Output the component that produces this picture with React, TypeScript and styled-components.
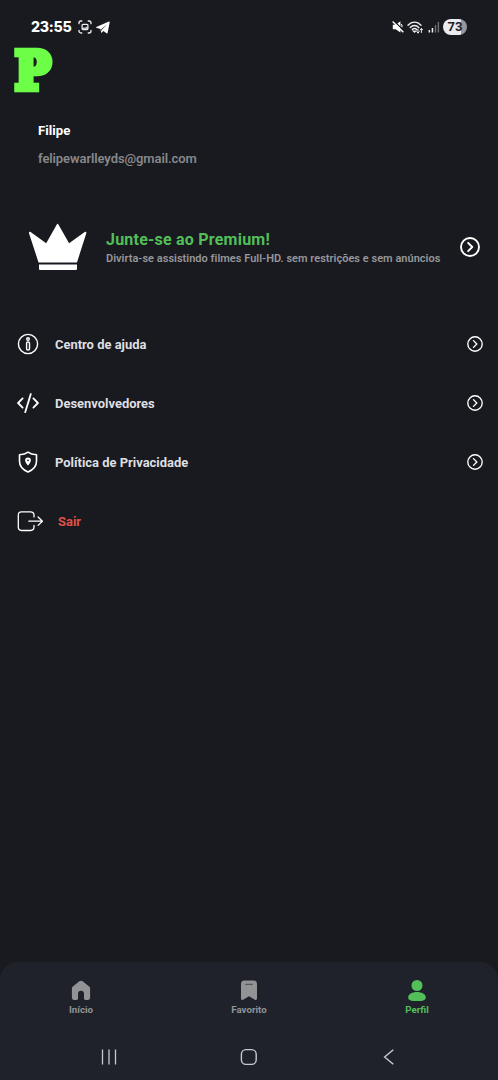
import React from 'react';
import styled, { createGlobalStyle } from 'styled-components';

const GlobalStyle = createGlobalStyle`
  * { box-sizing: border-box; }
  body { margin: 0; background: #191a1f; font-family: Roboto, sans-serif; }
  svg { display: block; flex: none; }
`;

const Screen = styled.div`
  display: flex;
  flex-direction: column;
  width: 100%;
  height: 1080px;
  overflow: hidden;
  background: #191a1f;
  color: #fff;
`;

const StatusBar = styled.header`
  display: flex;
  align-items: center;
  justify-content: space-between;
  height: 46px;
  padding: 8px 31px 0;
`;

const StatusGroup = styled.div<{ $gap: number }>`
  display: flex;
  align-items: center;
  gap: ${(p) => p.$gap}px;
`;

const Clock = styled.span`
  width: 41px;
  margin-right: 2px;
  font: 800 14.2px/18px Inter, sans-serif;
  letter-spacing: -0.25px;
  white-space: nowrap;
`;

const Battery = styled.span`
  width: 24px;
  height: 16px;
  border-radius: 8px;
  background: linear-gradient(90deg, #ececf0 73%, #96979c 73%);
  color: #202126;
  font: 700 13px/16px Roboto, sans-serif;
  text-align: center;
`;

const Brand = styled.div`
  height: 54px;
  padding-left: 15px;
  color: #6dff48;
  font: 700 52px/50px 'DejaVu Serif', serif;
  -webkit-text-stroke: 6.5px #6dff48;
  transform: scaleX(0.913);
  transform-origin: 15px 0;
`;

const Account = styled.section`
  display: flex;
  flex-direction: column;
  gap: 8px;
  height: 110px;
  padding: 21px 38px 0;
`;

const Name = styled.span`
  font: 700 13.2px/20px Roboto, sans-serif;
`;

const Email = styled.span`
  color: #87888b;
  font: 600 13px/20px Roboto, sans-serif;
  letter-spacing: -0.09px;
`;

const Premium = styled.section`
  display: flex;
  align-items: center;
  height: 74px;
  padding: 0 18px 0 28px;
`;

const PremiumCopy = styled.div`
  display: flex;
  flex: 1;
  flex-direction: column;
  padding: 3px 0 0 18px;
  white-space: nowrap;
`;

const PremiumTitle = styled.span`
  color: #52bf59;
  font: 700 16px/20px Roboto, sans-serif;
  letter-spacing: 0.22px;
`;

const PremiumText = styled.span`
  color: #96979b;
  font: 600 11px/17px Roboto, sans-serif;
  letter-spacing: 0.02px;
`;

const Menu = styled.nav`
  display: flex;
  flex-direction: column;
  padding: 30px 15px 0 17px;
`;

const MenuRow = styled.div`
  display: flex;
  align-items: center;
  height: 59px;
`;

const IconSlot = styled.span<{ $width: number }>`
  width: ${(p) => p.$width}px;
`;

const MenuLabel = styled.span<{ $danger?: boolean }>`
  flex: 1;
  padding-top: 3px;
  color: ${(p) => (p.$danger ? '#df5148' : '#dedfe1')};
  font: 700 12.95px/20px Roboto, sans-serif;
`;

const BottomArea = styled.footer`
  height: 118px;
  margin-top: auto;
  border-radius: 18px 18px 0 0;
  background: #1f222a;
`;

const Tabs = styled.nav`
  display: grid;
  grid-template-columns: repeat(3, 168px);
  justify-content: center;
  height: 71px;
  padding-top: 17px;
`;

const Tab = styled.div<{ $active?: boolean }>`
  display: flex;
  flex-direction: column;
  align-items: center;
  gap: 2px;
  color: ${(p) => (p.$active ? '#52bf59' : '#929395')};
  font: 700 9.7px/13px Roboto, sans-serif;
`;

const SystemNav = styled.div`
  display: grid;
  grid-template-columns: repeat(3, 140px);
  align-items: center;
  justify-content: center;
  justify-items: center;
  height: 48px;
`;

const Arrow = ({ size, weight }: { size: number; weight: number }) => (
  <svg width={size} height={size} viewBox="0 0 20 20" fill="none" stroke="#fff" strokeWidth={weight} strokeLinecap="round" strokeLinejoin="round">
    <circle cx="10" cy="10" r="9" />
    <path d="M8.1 5.8 12.3 10l-4.2 4.2" />
  </svg>
);

const CaptureIcon = () => (
  <svg width="14" height="14" viewBox="0 0 14 14" fill="none" stroke="#eee" strokeWidth="1.3" strokeLinecap="round">
    <path d="M1 3.7V3a2 2 0 0 1 2-2h.8M10.2 1h.8a2 2 0 0 1 2 2v.7M13 10.3v.7a2 2 0 0 1-2 2h-.8M3.8 13H3a2 2 0 0 1-2-2v-.7" />
    <rect x="4.1" y="4.3" width="5.8" height="5.2" rx="1" />
    <path d="M4.5 8.6 6 7.7l1 .5L8.5 7l1 1.6Z" fill="#eee" strokeWidth=".6" />
  </svg>
);

const SendIcon = () => (
  <svg width="14" height="13" viewBox="0 0 14 13" fill="#fff">
    <path d="M.3 5.9 12.9.5c.6-.2.9.1.8.7l-2 10.4c-.1.8-.6 1-1.2.6L7.4 9.9 5.9 11.5c-.4.4-.8.3-.9-.4L4.5 8 .4 6.8c-.6-.2-.6-.6-.1-.9Zm4.9 2.3.4 2.2.5-2 5-5.2Z" />
  </svg>
);

const MuteIcon = () => (
  <svg width="12" height="12" viewBox="0 0 12 12">
    <path d="M.8 3.7h2.9L8.4.3v11.2L3.7 8.3H.8Z" fill="#fff" />
    <path d="M9.3 3.2c.9.9.9 2 .5 3.1" fill="none" stroke="#fff" strokeWidth="1.1" />
    <path d="m1.5-.5 10.4 10.4" stroke="#191a1f" strokeWidth="1.3" />
    <path d="m.6.6 10.8 10.6" stroke="#fff" strokeWidth="1.4" />
  </svg>
);

const WifiIcon = () => (
  <svg width="17" height="13" viewBox="0 0 17 13" fill="none" stroke="#ededf0" strokeWidth="1.4" strokeLinecap="round">
    <path d="M1 4.3c3.7-4.2 9.3-4.2 13 0M3.2 6.5c2.6-2.7 6-2.7 8.6 0M5.3 8.6c1.4-1.3 3-1.3 4.4 0" />
    <path d="m7.5 11-.9-.9h1.8Z" fill="#fff" />
    <path d="M11 8v4m-1.3-1.3L11 12l1.3-1.3M14.4 11.5v-4m-1.3 1.3 1.3-1.3 1.3 1.3" strokeWidth="1" />
  </svg>
);

const SignalIcon = () => (
  <svg width="12" height="12" viewBox="0 0 12 12">
    <path d="M.6 9h1.5v2.5H.6ZM3.7 7h1.5v4.5H3.7Z" fill="#ededf0" />
    <path d="M6.8 4h1.4v7.5H6.8ZM9.7 1h1.4v10.5H9.7Z" fill="#707176" />
  </svg>
);

const CrownIcon = () => (
  <svg width="60" height="48" viewBox="0 0 60 48" fill="#fff">
    <path d="M1 10.2c-.3-1.2.7-1.8 1.6-1.1l15.6 11.2L28.8 1.5c.5-.9 1.1-.9 1.6 0l10.7 18.8L56.7 9.1c1-.7 2 0 1.6 1.2L49 39.4H10.5Z" />
    <path d="M11 41.4h38v4.6q0 1-1 1H12q-1 0-1-1Z" />
  </svg>
);

const InfoIcon = () => (
  <svg width="22" height="22" viewBox="0 0 22 22" fill="none" stroke="#fff" strokeWidth="1.4">
    <circle cx="11" cy="11" r="9.6" />
    <circle cx="11" cy="6" r="1.3" />
    <rect x="9.6" y="9" width="2.9" height="8" rx="1.3" />
  </svg>
);

const CodeIcon = () => (
  <svg width="22" height="22" viewBox="0 0 22 22" fill="none" stroke="#fff" strokeWidth="1.8" strokeLinecap="round" strokeLinejoin="round">
    <path d="M5.6 6.4 1.1 11l4.5 4.6M16.4 6.4l4.5 4.6-4.5 4.6M13.8 2 8.2 20.2" />
  </svg>
);

const ShieldIcon = () => (
  <svg width="22" height="22" viewBox="0 0 22 22" fill="none" stroke="#fff" strokeWidth="1.6" strokeLinejoin="round">
    <path d="M11 1.2c2.5 1.9 5.1 2.4 8.5 2.5v6.6c0 5.3-3.2 8.5-8.5 10.8-5.3-2.3-8.5-5.5-8.5-10.8V3.7c3.4-.1 6-.6 8.5-2.5Z" />
    <path d="M11 6.5a2.9 2.9 0 0 0-2.9 2.8c0 2.1 2.9 5.4 2.9 5.4s2.9-3.3 2.9-5.4A2.9 2.9 0 0 0 11 6.5Z" fill="#fff" stroke="none" />
    <circle cx="11" cy="9.3" r=".9" fill="#191a1f" stroke="none" />
  </svg>
);

const ExitIcon = () => (
  <svg width="27" height="22" viewBox="0 0 27 22" fill="none" stroke="#fff" strokeWidth="1.3" strokeLinecap="round" strokeLinejoin="round">
    <path d="M17 6.9V5.3c0-2.4-1.3-3.5-3.5-3.5h-9C2.3 1.8 1.3 2.9 1.3 5.3v11.8c0 2.3 1 3.4 3.2 3.4h9c2.2 0 3.5-1.1 3.5-3.4v-1.6" />
    <path d="M11.8 11.2h13.6M21.1 7l4.3 4.2-4.3 4.2" />
  </svg>
);

const HomeIcon = () => (
  <svg width="20" height="22" viewBox="0 0 20 22" fill="currentColor">
    <path d="M8.3 2.3c1-.9 2.3-.9 3.4 0l6.4 5.2c.8.7 1 1.4 1 2.4v8.7c0 1.6-.8 2.3-2.3 2.3h-2.3c-1 0-1.5-.6-1.5-1.6v-4.4c0-2-1.1-3.2-3-3.2s-3 1.2-3 3.2v4.4c0 1-.5 1.6-1.5 1.6H3.2C1.7 20.9.9 20.2.9 18.6V9.9c0-1 .2-1.7 1-2.4Z" />
  </svg>
);

const BookmarkIcon = () => (
  <svg width="20" height="22" viewBox="0 0 20 22">
    <path d="M2 5.2c0-2.6 1.2-3.8 3.5-3.8h9C16.8 1.4 18 2.6 18 5.2v14.3c0 1.3-1 1.8-2.1 1.2L10 17.2l-5.9 3.5c-1.1.6-2.1.1-2.1-1.2Z" fill="currentColor" />
    <path d="M6.7 5.4h6.6" stroke="#55585c" strokeWidth="1.2" strokeLinecap="round" />
  </svg>
);

const PersonIcon = () => (
  <svg width="20" height="22" viewBox="0 0 20 22" fill="currentColor">
    <ellipse cx="10" cy="6.5" rx="5.5" ry="5.6" />
    <path d="M10 12.9c4.6 0 8.8 2.1 8.8 5.3s-2.6 3.8-8.8 3.8-8.8-.6-8.8-3.8 4.2-5.3 8.8-5.3Z" />
  </svg>
);

const menu = [
  { label: 'Centro de ajuda', Icon: InfoIcon },
  { label: 'Desenvolvedores', Icon: CodeIcon },
  { label: 'Política de Privacidade', Icon: ShieldIcon },
];

export default function App() {
  return (
    <Screen>
      <GlobalStyle />
      <StatusBar>
        <StatusGroup $gap={4}>
          <Clock>23:55</Clock>
          <CaptureIcon />
          <SendIcon />
        </StatusGroup>
        <StatusGroup $gap={3.5}>
          <MuteIcon />
          <WifiIcon />
          <SignalIcon />
          <Battery>73</Battery>
        </StatusGroup>
      </StatusBar>
      <Brand>P</Brand>
      <Account>
        <Name>Filipe</Name>
        <Email>felipewarlleyds@gmail.com</Email>
      </Account>
      <Premium>
        <CrownIcon />
        <PremiumCopy>
          <PremiumTitle>Junte-se ao Premium!</PremiumTitle>
          <PremiumText>Divirta-se assistindo filmes Full-HD. sem restrições e sem anúncios</PremiumText>
        </PremiumCopy>
        <Arrow size={20} weight={1.9} />
      </Premium>
      <Menu>
        {menu.map(({ label, Icon }) => (
          <MenuRow key={label}>
            <IconSlot $width={38}><Icon /></IconSlot>
            <MenuLabel>{label}</MenuLabel>
            <Arrow size={16} weight={1.7} />
          </MenuRow>
        ))}
        <MenuRow>
          <IconSlot $width={41}><ExitIcon /></IconSlot>
          <MenuLabel $danger>Sair</MenuLabel>
        </MenuRow>
      </Menu>
      <BottomArea>
        <Tabs>
          <Tab><HomeIcon />Início</Tab>
          <Tab><BookmarkIcon />Favorito</Tab>
          <Tab $active><PersonIcon />Perfil</Tab>
        </Tabs>
        <SystemNav>
          <svg width="16" height="16" viewBox="0 0 16 16" stroke="#c9cacd" strokeWidth="1.3"><path d="M1.5.5v15M8 .5v15M14.5.5v15" /></svg>
          <svg width="18" height="18" viewBox="0 0 18 18" fill="none" stroke="#c9cacd" strokeWidth="1.4"><rect x="1.4" y="1.6" width="14.8" height="14.8" rx="4.6" /></svg>
          <svg width="12" height="16" viewBox="0 0 12 16" fill="none" stroke="#c9cacd" strokeWidth="1.4"><path d="M10.3.8 1.6 8l8.7 7.2" /></svg>
        </SystemNav>
      </BottomArea>
    </Screen>
  );
}
